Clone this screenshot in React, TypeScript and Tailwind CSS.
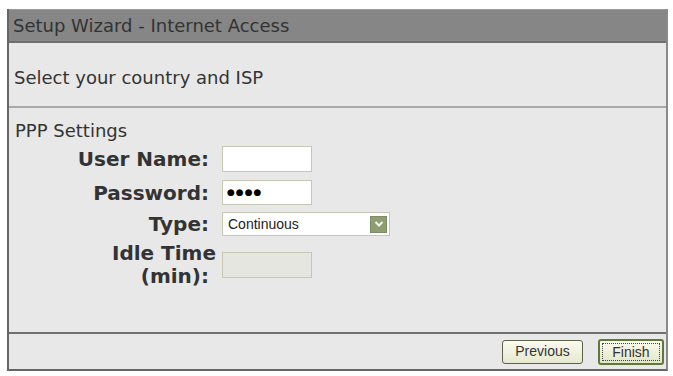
import React from "react";

const font = { fontFamily: '"DejaVu Sans", Verdana, sans-serif' };
const small = { fontFamily: '"Liberation Sans", Tahoma, sans-serif' };

function Field({ label, children }: { label: React.ReactNode; children: React.ReactNode }) {
  return (
    <div className="flex items-center">
      <div className="w-[200px] text-right text-[20px] font-bold text-[#333] leading-[24px]">{label}</div>
      <div className="ml-[13px]">{children}</div>
    </div>
  );
}

export default function App() {
  return (
    <div className="w-[673px] h-[376px] bg-white pt-[9px] pl-[7px]" style={font}>
      <div className="w-[661px] h-[362px] bg-[#e8e8e8] border-l-2 border-l-[#666] border-r-2 border-r-[#8a8a8a] border-b-2 border-b-[#666] flex flex-col">
        <div className="h-[34px] shrink-0 bg-[#868686] border-t border-t-[#9a9a9a] border-b-2 border-b-[#6f6f6f] flex items-center pl-[4px] text-[18px] text-[#333]">
          Setup Wizard - Internet Access
        </div>

        <div className="h-[65px] shrink-0 border-b-2 border-b-[#a8a8a8] flex items-center pl-[5px] pt-[5px] text-[18px] text-[#333]">
          Select your country and ISP
        </div>

        <div className="h-[226px] shrink-0 border-b-2 border-b-[#707070] pl-[6px]">
          <div className="text-[18px] text-[#333] mt-[12px] leading-[22px]">PPP Settings</div>

          <div className="flex flex-col ml-[-6px] mt-[4px]">
            <Field label="User Name:">
              <div className="w-[90px] h-[26px] bg-white border border-[#c6c8b4]" />
            </Field>

            <div className="mt-[8px]">
              <Field label="Password:">
                <div className="w-[90px] h-[25px] bg-white border border-[#c6c8b4] flex items-center pl-[4px] text-[9px] tracking-[1px] text-black">
                  ●●●●
                </div>
              </Field>
            </div>

            <div className="mt-[7px]">
              <Field label="Type:">
                <div className="w-[168px] h-[24px] bg-white border border-[#c6c8b4] flex items-center justify-between">
                  <span className="pl-[5px] text-[14px] text-[#222]" style={small}>
                    Continuous
                  </span>
                  <span className="w-[17px] h-[17px] mr-[2px] bg-[#8e9e72] border border-[#7d8c62] flex items-center justify-center">
                    <svg width="10" height="8" viewBox="0 0 10 8">
                      <path d="M1.5 2l3.5 3.5 3.5-3.5" fill="none" stroke="#f4f6ee" strokeWidth="2" />
                    </svg>
                  </span>
                </div>
              </Field>
            </div>

            <div className="mt-[6px] flex items-start">
              <div className="w-[200px] flex flex-col items-end text-[20px] font-bold text-[#333] leading-[23px]">
                <span className="mr-[-7px]">Idle Time</span>
                <span>(min):</span>
              </div>
              <div className="ml-[13px] mt-[10px] w-[90px] h-[26px] bg-[#e6e6e0] border border-[#c6c8b4]" />
            </div>
          </div>
        </div>

        <div className="flex-1 flex items-center justify-end gap-[15px] pr-[2px]">
          <button
            className="w-[81px] h-[24px] rounded-[3px] border border-[#5e6247] bg-gradient-to-b from-[#fbfbef] to-[#e6e8cf] text-[14px] text-[#333]"
            style={small}
          >
            Previous
          </button>
          <button
            className="w-[66px] h-[26px] rounded-[3px] border-2 border-[#5d7a3a] bg-gradient-to-b from-[#fbfbef] to-[#e2e6c8] text-[14px] text-[#333] p-[2px]"
            style={small}
          >
            <span className="block h-full border border-dotted border-[#444] leading-[16px]">Finish</span>
          </button>
        </div>
      </div>
    </div>
  );
}
